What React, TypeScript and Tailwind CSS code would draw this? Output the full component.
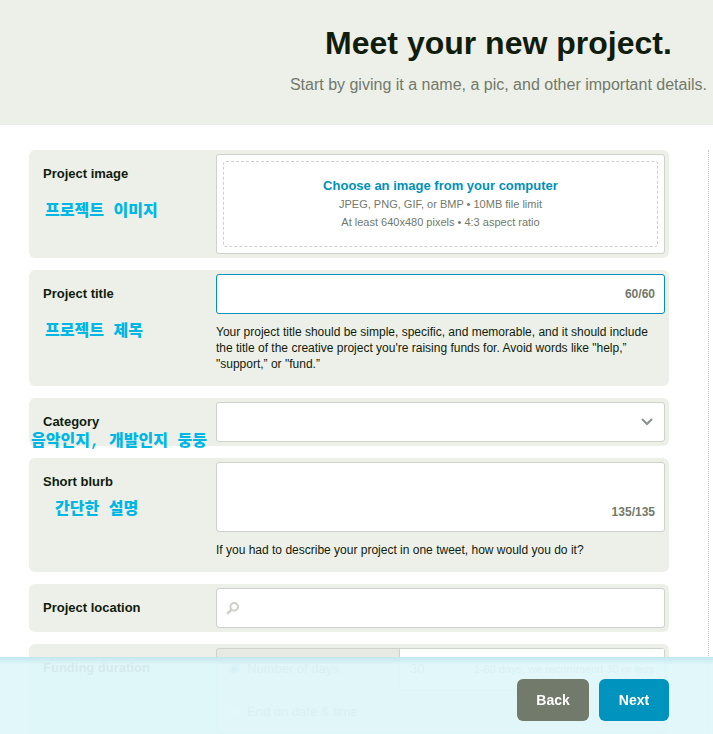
import { type ReactNode, useState } from 'react'

const TITLE_LIMIT = 60
const BLURB_LIMIT = 135

const FIELD = 'block w-full rounded-[3px] border border-[#ccd3cb] bg-white text-sm text-[#101c0c] outline-none focus:border-[#0090ba]'
const RADIO = 'h-2.5 w-2.5 appearance-none rounded-full border border-[#dde2da] bg-white checked:border-[3px] checked:border-[#9dbfc8] checked:bg-[#0090ba]'

/* ════════════════════════════════════════════════════════
   Row — label column + field column
   ════════════════════════════════════════════════════ */
type RowProps = {
  label: string
  htmlFor: string
  note?: string
  noteClass?: string
  className?: string
  children: ReactNode
}

function Row({ label, htmlFor, note, noteClass = '', className = '', children }: RowProps) {
  return (
    <div className={`flex rounded-md bg-[#edf0e8] p-1 ${className}`}>
      <div className="w-[183px] shrink-0 pl-2.5 pt-2.5">
        <label htmlFor={htmlFor} className="block text-[13px] leading-5 font-bold text-[#101c0c]">
          {label}
        </label>
        {note && (
          <p
            lang="ko"
            className={`whitespace-nowrap font-['Liberation_Mono','Noto_Sans_CJK_KR',monospace] text-base leading-5 font-black text-[#00b7e4] ${noteClass}`}
          >
            {note}
          </p>
        )}
      </div>
      <div className="min-w-0 flex-1">{children}</div>
    </div>
  )
}

function Help({ children }: { children: ReactNode }) {
  return <p className="pt-2.5 text-xs leading-4 text-[#101c0c]">{children}</p>
}

/* ════════════════════════════════════════════════════════
   ProjectForm — basics step
   ════════════════════════════════════════════════════ */
function ProjectForm() {
  const [title, setTitle] = useState('')
  const [blurb, setBlurb] = useState('')
  const [duration, setDuration] = useState('days')

  return (
    <form id="basics" className="flex min-w-0 flex-1 flex-col gap-3">
      <Row label="Project image" htmlFor="image" note="프로젝트 이미지" noteClass="mt-[18px] ml-0.5">
        <div className="rounded-[3px] border border-[#ccd3cb] bg-white p-1.5">
          <label
            htmlFor="image"
            className="flex h-[86px] cursor-pointer flex-col items-center justify-center rounded-[3px] border border-dashed border-[#ccd3cb] text-[11px] leading-[18px] text-[#72796b]"
          >
            <span className="text-[13px] font-bold text-[#0090ba]">Choose an image from your computer</span>
            <span>JPEG, PNG, GIF, or BMP • 10MB file limit</span>
            <span>At least 640x480 pixels • 4:3 aspect ratio</span>
          </label>
          <input id="image" type="file" accept=".jpg,.jpeg,.png,.gif,.bmp" className="sr-only" />
        </div>
      </Row>

      <Row label="Project title" htmlFor="title" note="프로젝트 제목" noteClass="mt-[18px] ml-0.5" className="pb-3.5">
        <div className="relative">
          <input
            id="title"
            type="text"
            maxLength={TITLE_LIMIT}
            value={title}
            onChange={e => setTitle(e.target.value)}
            className="block h-10 w-full rounded-[3px] border border-[#0090ba] bg-white pr-16 pl-2.5 text-sm text-[#101c0c] outline-none"
          />
          <span className="absolute top-2.5 right-2.5 text-xs leading-5 font-bold text-[#72796b]">
            {TITLE_LIMIT - title.length}/{TITLE_LIMIT}
          </span>
        </div>
        <Help>
          Your project title should be simple, specific, and memorable, and it should include the title of the
          creative project you're raising funds for. Avoid words like "help,” "support,” or "fund.”
        </Help>
      </Row>

      <Row label="Category" htmlFor="category" note="음악인지, 개발인지 둥둥" noteClass="-ml-3" className="h-12">
        <div className="relative">
          <select id="category" defaultValue="" className={`${FIELD} h-10 appearance-none px-2.5`}>
            <option value="" />
            <option value="music">Music</option>
            <option value="technology">Technology</option>
          </select>
          <svg
            viewBox="0 0 12 8"
            fill="none"
            stroke="#8c938d"
            strokeWidth="2.2"
            className="pointer-events-none absolute top-4 right-3 h-2 w-3"
          >
            <path d="M1 1l5 5 5-5" />
          </svg>
        </div>
      </Row>

      <Row label="Short blurb" htmlFor="blurb" note="간단한 설명" noteClass="mt-2 ml-3" className="pb-3.5">
        <div className="relative">
          <textarea
            id="blurb"
            maxLength={BLURB_LIMIT}
            value={blurb}
            onChange={e => setBlurb(e.target.value)}
            className={`${FIELD} h-[70px] resize-none p-2.5`}
          />
          <span className="absolute right-2.5 bottom-2.5 text-xs leading-5 font-bold text-[#72796b]">
            {BLURB_LIMIT - blurb.length}/{BLURB_LIMIT}
          </span>
        </div>
        <Help>If you had to describe your project in one tweet, how would you do it?</Help>
      </Row>

      <Row label="Project location" htmlFor="location">
        <div className="relative">
          <input id="location" type="text" className={`${FIELD} h-10 pr-2.5 pl-8`} />
          <svg
            viewBox="0 0 13 13"
            fill="none"
            stroke="#ccd0c8"
            strokeWidth="2"
            className="pointer-events-none absolute top-3.5 left-2.5 h-[13px] w-[13px]"
          >
            <circle cx="8.2" cy="4.8" r="3.8" />
            <path d="M5.4 7.6L1.2 11.8" strokeWidth="2.6" />
          </svg>
        </div>
      </Row>

      <Row label="Funding duration" htmlFor="days">
        <div className="rounded-[3px] border border-[#ccd3cb] bg-[#e6eae2] text-[13px] text-[#72796b]">
          <div className="flex h-10">
            <label className="flex w-[183px] shrink-0 items-center gap-2 border-r border-[#ccd3cb] pl-3">
              <input
                type="radio"
                name="duration"
                checked={duration === 'days'}
                onChange={() => setDuration('days')}
                className={RADIO}
              />
              Number of days
            </label>
            <div className="flex min-w-0 flex-1 items-center bg-white px-2.5">
              <input id="days" type="text" defaultValue="30" className="w-10 outline-none" />
              <span className="flex-1 text-right text-[11px] whitespace-nowrap">1-60 days, we recommend 30 or less</span>
            </div>
          </div>
          <label className="flex h-11 items-center gap-2 border-t border-[#dde2da] pl-3">
            <input
              type="radio"
              name="duration"
              checked={duration === 'date'}
              onChange={() => setDuration('date')}
              className={RADIO}
            />
            End on date &amp; time
          </label>
        </div>
      </Row>
    </form>
  )
}

export default function App() {
  return (
    <div className="h-screen overflow-hidden bg-white font-['Liberation_Sans',Arial,sans-serif]">
      <header className="flex h-[125px] justify-end bg-[#edf0e8] pr-1.5">
        <div className="pt-[23px] text-center">
          <h1 className="text-[32px] leading-10 font-bold text-[#101c0c]">Meet your new project.</h1>
          <p className="pt-3 text-base leading-5 text-[#72796b]">
            Start by giving it a name, a pic, and other important details.
          </p>
        </div>
      </header>

      <main className="flex gap-[39px] pt-[25px] pl-[29px]">
        <ProjectForm />
        <aside className="w-[5px] border-l border-dotted border-[#c4c8c2]" />
      </main>

      {/* Bottom bar */}
      <div className="fixed inset-x-0 bottom-0 bg-[#dff6fa]/94">
        <div className="flex h-[77px] items-start justify-end gap-2.5 bg-linear-to-b from-[#b4dfe8]/70 to-transparent to-10% pt-[22px] pr-11">
          <button type="button" className="h-[42px] w-[72px] rounded-md bg-[#727a6b] text-sm font-bold text-white">
            Back
          </button>
          <button
            type="submit"
            form="basics"
            className="h-[42px] w-[70px] rounded-md bg-[#0093bd] text-sm font-bold text-white"
          >
            Next
          </button>
        </div>
      </div>
    </div>
  )
}
